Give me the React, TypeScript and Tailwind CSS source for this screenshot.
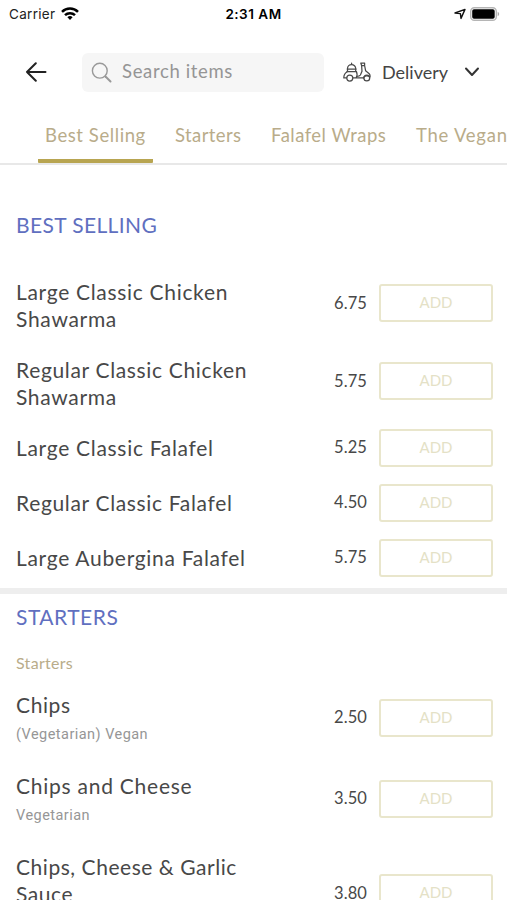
import clsx from 'clsx'

interface MenuItem {
  name: string[]
  price: string
  note?: string
  height: string
  tracking: string
}

const bestSelling: MenuItem[] = [
  { name: ['Large Classic Chicken', 'Shawarma'], price: '6.75', height: 'h-[78px]', tracking: 'tracking-[0.69px]' },
  { name: ['Regular Classic Chicken', 'Shawarma'], price: '5.75', height: 'h-[78px]', tracking: 'tracking-[0.66px]' },
  { name: ['Large Classic Falafel'], price: '5.25', height: 'h-[55px]', tracking: 'tracking-[0.7px]' },
  { name: ['Regular Classic Falafel'], price: '4.50', height: 'h-[55px]', tracking: 'tracking-[0.66px]' },
  { name: ['Large Aubergina Falafel'], price: '5.75', height: 'h-[55px]', tracking: 'tracking-[0.7px]' },
]

const starters: MenuItem[] = [
  { name: ['Chips'], price: '2.50', note: '(Vegetarian) Vegan', height: 'h-[81px]', tracking: 'tracking-[0.6px]' },
  { name: ['Chips and Cheese'], price: '3.50', note: 'Vegetarian', height: 'h-[81px]', tracking: 'tracking-[0.75px]' },
  { name: ['Chips, Cheese & Garlic', 'Sauce'], price: '3.80', note: 'Vegetarian', height: 'h-[108px]', tracking: 'tracking-[0.54px]' },
]

function StatusBar() {
  return (
    <div className="grid h-7 shrink-0 grid-cols-3 items-center pl-[9px] pr-[7px] font-['Inter',sans-serif] text-[13.5px] text-black">
      <div className="flex items-center gap-[6px]">
        <span className="tracking-[0.3px] text-[#222]">Carrier</span>
        <svg width="18" height="14" viewBox="0 0 18 14" fill="none" stroke="#000" strokeWidth="2.5">
          <path d="M1 4.8a11.4 11.4 0 0 1 16 0" />
          <path d="M4 8.2a7.1 7.1 0 0 1 10 0" />
          <path d="M6.4 10.3a3.8 3.8 0 0 1 5.2 0L9 13z" fill="#000" stroke="none" />
        </svg>
      </div>
      <span className="-ml-[2px] text-center font-semibold tracking-[0.5px]">2:31 AM</span>
      <div className="flex items-center justify-end gap-[4px] pb-px">
        <svg width="12" height="12" viewBox="0 0 12 12" fill="none" stroke="#111" strokeWidth="1.4" strokeLinejoin="round">
          <path d="M1 5 11 1.4 7 10.4 6.4 5.6z" />
        </svg>
        <svg width="30" height="14" viewBox="0 0 30 14">
          <rect x="0.7" y="0.7" width="25.6" height="12.6" rx="3.6" fill="#fff" stroke="#b5b5b5" strokeWidth="1.4" />
          <rect x="2.2" y="2.3" width="22.5" height="9.4" rx="1.8" fill="#000" />
          <path d="M27.7 4.8c2 .8 2 3.6 0 4.4z" fill="#a8a8a8" />
        </svg>
      </div>
    </div>
  )
}

function ScooterIcon() {
  return (
    <svg width="28" height="20" viewBox="0 0 28 20" fill="none" stroke="#4a4a4a" strokeWidth="1.25" strokeLinecap="round" strokeLinejoin="round">
      <path d="M4.5 9.3V6.6a4.1 4.1 0 0 1 8.2 0v2.7" />
      <path d="M8.6 2.3V1.2M4.3 7h8.7M4 9.6h9.2" />
      <path d="M4.2 9.8C2 11 .8 13 .8 15.9h2.7M10.2 15.9h10.4M13.4 9.6c1 2.2.8 4.4-.3 6.2" />
      <circle cx="6.8" cy="16" r="3" />
      <path d="M17.8 1h3.8v2.5h-3zM18.6 3.5l.4 5.8-1.6 3.7c-.6 1-1.6 1.4-3.6 1.4M21.6 3.5l1 5.2 3.6 3c.9.9 1 2 .8 3.2-2.6-1.8-5.6-1-6.6 1" />
      <circle cx="23.8" cy="16" r="2.9" />
    </svg>
  )
}

function Header() {
  return (
    <header className="flex h-[88px] shrink-0 items-center">
      <svg className="ml-[25px] shrink-0" width="22" height="20" viewBox="0 0 22 20" fill="none" stroke="#222" strokeWidth="2" strokeLinecap="round" strokeLinejoin="round">
        <path d="M20.5 10H2M10.8 1.2 2 10l8.8 8.8" />
      </svg>
      <div className="ml-[35px] flex h-[39px] w-[242px] shrink-0 items-center rounded-md bg-[#f6f6f6] pl-[9px] text-[18.5px] tracking-[0.65px] text-[#959595]">
        <svg className="mr-[10px]" width="21" height="21" viewBox="0 0 21 21" fill="none" stroke="#999" strokeWidth="1.4" strokeLinecap="round">
          <circle cx="8.8" cy="8.7" r="7.4" />
          <path d="m14.5 14.5 5 5" strokeWidth="2" />
        </svg>
        Search items
      </div>
      <button className="ml-[19px] flex items-center text-[18px] text-[#444]">
        <ScooterIcon />
        <span className="ml-[11px] w-[66px] whitespace-nowrap text-left">Delivery</span>
        <svg className="ml-[16px]" width="16" height="10" viewBox="0 0 16 10" fill="none" stroke="#333" strokeWidth="2" strokeLinecap="round" strokeLinejoin="round">
          <path d="m2 1.5 6 6.5 6-6.5" />
        </svg>
      </button>
    </header>
  )
}

function Tabs() {
  return (
    <nav className="flex h-[49px] shrink-0 overflow-hidden whitespace-nowrap border-b-2 border-[#e8e8e8] pl-[38px] text-[18.5px] leading-[39px] text-[#b9ac8a]">
      <div className="w-[115px] shrink-0 rounded-b-[1px] border-b-4 border-[#b8a551] pl-[7px] tracking-[0.58px]">Best Selling</div>
      <div className="w-[95px] shrink-0 pl-[22px] tracking-[0.4px]">Starters</div>
      <div className="w-[145px] shrink-0 pl-[23px] tracking-[0.48px]">Falafel Wraps</div>
      <div className="shrink-0 pl-[23px] tracking-[0.75px]">The Vegan</div>
    </nav>
  )
}

function ItemRow({ item }: { item: MenuItem }) {
  return (
    <div className={clsx('flex shrink-0 items-center pl-4 pr-[14px]', item.height)}>
      <div className="flex-1 self-start whitespace-nowrap pt-[14px]">
        <div className={clsx('text-[21px] leading-[27px] text-[#484848]', item.tracking)}>
          {item.name.map((line) => (
            <div key={line}>{line}</div>
          ))}
        </div>
        {item.note && (
          <div className="pt-[7px] font-['Roboto',sans-serif] text-[14.5px] leading-5 tracking-[0.46px] text-[#969696]">{item.note}</div>
        )}
      </div>
      <span className="text-[16.5px] tracking-[0.1px] text-[#484848]">{item.price}</span>
      <button className="ml-[12px] h-[38px] w-[114px] rounded-[3px] border-2 border-[#e9e6cc] pb-px text-[15px] text-[#e4e1c6]">
        ADD
      </button>
    </div>
  )
}

export default function App() {
  return (
    <div className="flex h-[900px] w-[507px] flex-col overflow-hidden bg-white font-['Lato',sans-serif]">
      <StatusBar />
      <Header />
      <Tabs />
      <section className="flex h-[423px] shrink-0 flex-col">
        <h2 className="h-[99px] shrink-0 px-4 pt-[45px] text-[21px] leading-[30px] tracking-[0.38px] text-[#606fc0]">BEST SELLING</h2>
        {bestSelling.map((item) => (
          <ItemRow key={item.name.join(' ')} item={item} />
        ))}
      </section>
      <div className="h-[6px] shrink-0 bg-[#eee]" />
      <section className="flex shrink-0 flex-col">
        <h2 className="px-4 pt-[8px] text-[21px] leading-[30px] tracking-[0.5px] text-[#606fc0]">STARTERS</h2>
        <h3 className="h-[45px] px-4 pt-[21px] text-[16px] leading-5 tracking-[0.3px] text-[#b9ac8a]">Starters</h3>
        {starters.map((item) => (
          <ItemRow key={item.name.join(' ')} item={item} />
        ))}
      </section>
    </div>
  )
}
